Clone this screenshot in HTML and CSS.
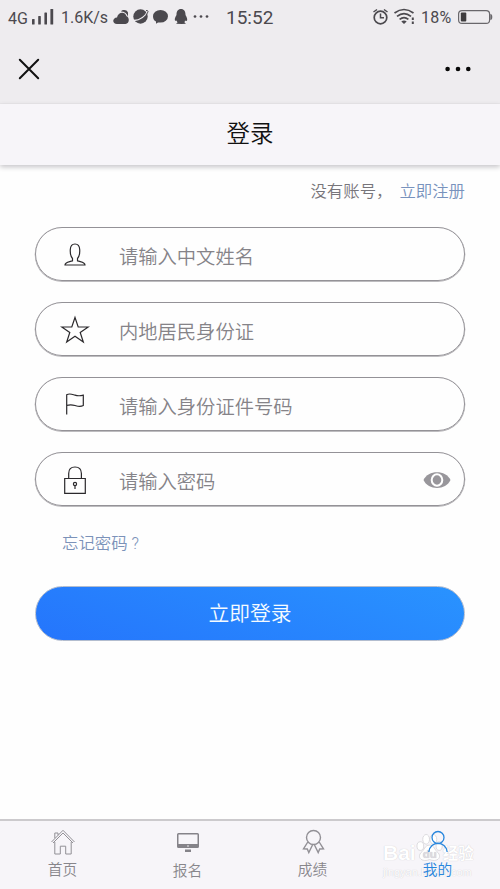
FILE: index.html
```html
<!DOCTYPE html>
<html lang="zh-CN">
<head>
<meta charset="utf-8">
<title>登录</title>
<link rel="stylesheet" href="styles.css">
</head>
<body>
<div class="app">
  <div class="status">
    <span class="net">4G</span>
    <svg class="signal" width="22" height="16" viewBox="0 0 22 16" fill="#4b494e"><rect y="10" width="2.6" height="5.5" rx=".6"/><rect x="6.2" y="7" width="2.6" height="8.5" rx=".6"/><rect x="12.4" y="3.5" width="2.6" height="12" rx=".6"/><rect x="18.4" y="0" width="2.8" height="15.5" rx=".6"/></svg>
    <span class="speed">1.6K/s</span>
    <svg class="apps" width="98" height="18" viewBox="112 8 98 18" fill="#4b494e"><path d="M117 24C112 24 112 17.800 117 17.500C118 12 125 11 126.500 16.300C129.500 17 130 23.800 125.500 24Z"/><path d="M121 11.500C122.500 9.300 127 9.500 128 12.500L128 16.500C126.500 13 124.500 11.500 121 11.500Z"/><circle cx="140.500" cy="16.500" r="7.200"/><path d="M134 20.500Q143 20 148 11" fill="none" stroke="#eeecef" stroke-width="1.300"/><path d="M146 10.500Q150 10 146 15" fill="none" stroke="#4b494e"/><path d="M153 16.200a7.500 6.300 0 1 1 7.500 6.300l-2.500 0-2 1.300 0-2.200Q153 20 153 16.200Z"/><path d="M176.500 15C176 7 186 7 185.500 15C187.500 18 187.800 21 186 21L185 20.500 184.500 22.500 186 23.700 181.700 24 176 23.700 177.500 22.500 176.500 20.500C174 21.500 174.500 18 176.500 15Z"/><circle cx="195" cy="16.500" r="1.350"/><circle cx="201" cy="16.500" r="1.350"/><circle cx="207" cy="16.500" r="1.350"/></svg>
    <span class="clock">15:52</span>
    <svg class="sys" width="46" height="18" viewBox="371 8 46 18" fill="none" stroke="#4b494e" stroke-width="1.700"><circle cx="380.500" cy="17.500" r="6.300"/><path d="M380.500 13.500V17.700H384M373.500 12L377 9.500M384 9.500L387.500 12" stroke-width="1.500"/><path d="M394.500 13Q404 6 413.500 13M397 16.300Q404 10.800 411 16.300M399.600 19.300Q404 15.800 408.400 19.300"/><path d="M401.300 21.500Q404 19.500 406.700 21.500L404 24Z" fill="#4b494e" stroke="none"/><path d="M412.800 17.500V20M412.800 21.500V24" stroke-width="2"/></svg>
    <span class="percent">18%</span>
    <svg class="battery" width="36" height="16" viewBox="457 9 36 16"><rect x="458.600" y="10.600" width="31" height="12.800" rx="3.500" fill="none" stroke="#69676b" stroke-width="1.200"/><rect x="460.800" y="12.500" width="5.500" height="9" rx="1" fill="#3e3c3e"/><path d="M490.300 14Q492.300 14 492.300 17T490.300 20Z" fill="#69676b"/></svg>
  </div>
  <div class="nav">
    <svg width="22" height="22" viewBox="0 0 22 22" fill="none" stroke="#111" stroke-width="2" stroke-linecap="round"><path d="M1.800 1.800L20.200 20.200M20.200 1.800L1.800 20.200"/></svg>
    <svg width="28" height="6" viewBox="0 0 28 6" fill="#080808"><circle cx="3.600" cy="3" r="2.300"/><circle cx="14" cy="3" r="2.300"/><circle cx="24.300" cy="3" r="2.300"/></svg>
  </div>
  <h1 class="title">登录</h1>
  <main class="login">
    <p class="register"><span>没有账号，</span><a>立即注册</a></p>
    <div class="field">
      <svg class="icon" width="30" height="30" viewBox="0 0 30 30"><path d="M5 25H25C25 22.300 22 22.300 17.500 20.900V18.500C18.800 17 20 14 19.700 9.500C19.500 5.500 18 4 15 4S10.500 5.500 10.300 9.500C10 14 11.200 17 12.500 18.500V20.900C8 22.300 5 22.300 5 25Z"/></svg>
      <span>请输入中文姓名</span>
    </div>
    <div class="field">
      <svg class="icon" width="30" height="30" viewBox="0 0 30 30"><path d="M15 2.500L18.200 12H28.200L20.200 17.500L23.300 27L15 21.200L6.700 27L9.800 17.500L1.800 12H11.800Z"/></svg>
      <span>内地居民身份证</span>
    </div>
    <div class="field">
      <svg class="icon" width="30" height="30" viewBox="0 0 30 30"><path d="M6.700 24.500V4.700C10 3 12.500 4.500 15 5.200S20 6 23.300 5.200V15.500C20 17.300 17.500 16.200 15 15.500S10 14.400 6.700 15.500"/></svg>
      <span>请输入身份证件号码</span>
    </div>
    <div class="field">
      <svg class="icon" width="30" height="30" viewBox="0 0 30 30"><path d="M4.700 13.500H25.300V28.300H4.700ZM8.700 13.500V8.500Q8.700 2 15 2T21.400 8.500V13.500"/><circle cx="15" cy="19" r="1.600"/><path d="M15 20.600V24"/></svg>
      <span>请输入密码</span>
      <svg class="eye" width="28" height="18" viewBox="0 0 28 18"><path d="M.5 9C5-1.500 23-1.500 27.500 9C23 19.500 5 19.500 .5 9Z" fill="#98969b"/><ellipse cx="14" cy="9" rx="5.300" ry="5.700" fill="#98969b" stroke="#fff" stroke-width="2"/></svg>
    </div>
    <a class="forgot">忘记密码<span>?</span></a>
    <div class="submit">立即登录</div>
  </main>
  <footer class="tabs">
    <div class="tab">
      <svg width="26" height="28" viewBox="0 0 26 28" fill="none" stroke="#929096" stroke-width="1"><path d="M1.500 14L13 2.300L24.500 14M3 15L13 5L23 15M4.800 14V26H10.300V18.200H15.700V26H21.200V14M4.800 10.200V5H8V7.200"/></svg>
      <span>首页</span>
    </div>
    <div class="tab low">
      <svg width="26" height="28" viewBox="0 0 26 28" fill="#858389"><path fill-rule="evenodd" d="M3.500 5H22.500Q24 5 24 6.500V18.500Q24 20 22.500 20H3.500Q2 20 2 18.500V6.500Q2 5 3.500 5ZM3.500 6.500V16H22.500V6.500Z"/><rect x="10" y="21.500" width="6" height="2.500"/><circle cx="13" cy="18" r=".8" fill="#f7f5f9"/></svg>
      <span>报名</span>
    </div>
    <div class="tab">
      <svg width="26" height="28" viewBox="0 0 26 28" fill="none" stroke="#929096" stroke-width="1.400"><circle cx="13.500" cy="9.500" r="7"/><path d="M7.800 14L3.500 20.800L7.300 21L8.800 24.500L12.500 17M19.200 14L23.500 20.800L19.700 21L18.200 24.500L14.500 17"/></svg>
      <span>成绩</span>
    </div>
    <div class="tab active">
      <svg width="26" height="28" viewBox="0 0 26 28" fill="none" stroke="#2886dd" stroke-width="1.300"><circle cx="13" cy="9.500" r="6"/><path d="M3.800 24C5 12.500 21 12.500 22.200 24"/></svg>
      <span>我的</span>
    </div>
    <div class="watermark">
      <div class="brand"><span>Bai</span><svg width="27" height="30" viewBox="0 0 28 30"><g fill="#fff" stroke="#d3d1d6" stroke-width=".8"><ellipse cx="4.500" cy="13" rx="3.500" ry="4.500"/><ellipse cx="10.500" cy="6" rx="3.500" ry="5"/><ellipse cx="18" cy="6" rx="3.500" ry="5"/><ellipse cx="24" cy="13" rx="3.200" ry="4.500"/><path d="M14 12C19 12 19 17 23 20C27 25 22 30 14 27C6 30 1 25 5 20C9 17 9 12 14 12Z"/></g><text x="7" y="25" class="du">du</text></svg><span class="cn">经验</span></div>
      <div class="url">jingyan.baidu.com</div>
    </div>
  </footer>
</div>
</body>
</html>
```
FILE: styles.css
```css
* { box-sizing: border-box; }
body {
  margin: 0;
  background: #fefefe;
  font-family: Roboto, "Noto Sans CJK SC", sans-serif;
  font-weight: 350;
}
.app { width: 500px; height: 889px; display: flex; flex-direction: column; overflow: hidden; }
.status {
  height: 34px;
  flex: none;
  display: flex;
  align-items: center;
  padding-left: 8px;
  background: #eeecef;
  color: #4b494e;
  font-weight: 400;
  white-space: nowrap;
}
.status svg { flex: none; }
.net { width: 24px; font-size: 16px; padding-top: 2px; }
.signal { margin-right: 7px; }
.speed { width: 49px; font-size: 16px; padding-top: 1px; }
.clock { width: 160px; padding-left: 16px; font-size: 19px; }
.percent { width: 36px; padding-left: 4px; font-size: 16px; letter-spacing: .3px; }
.sys { margin-left: 1px; }
.apps { margin-left: 2px; }
.battery { margin-left: 4px; }
.nav {
  height: 70px;
  flex: none;
  display: flex;
  align-items: center;
  justify-content: space-between;
  padding: 0 28px 0 18px;
  background: #eeecef;
  border-bottom: 1px solid #e8e6e9;
}
.title {
  margin: 0;
  height: 61px;
  flex: none;
  background: #f7f5f9;
  box-shadow: 0 2px 5px #c5c3c7;
  text-align: center;
  font-size: 23.5px;
  line-height: 60px;
  font-weight: 350;
  color: #111;
}
.login { flex: 1; padding: 0 35px; display: flex; flex-direction: column; }
.register {
  margin: 0 0 8px;
  height: 54px;
  line-height: 54px;
  display: flex;
  justify-content: flex-end;
  font-size: 16.4px;
  color: #77757a;
}
.register a { margin-left: 7px; color: #7892bd; }
.field {
  height: 54px;
  flex: none;
  margin-bottom: 21px;
  border: 1px solid #949297;
  box-shadow: 0 .5px 0 .3px #a8a6aa;
  border-radius: 27px;
  display: flex;
  align-items: center;
  padding: 0 13px 0 24px;
  font-size: 19.3px;
  color: #858388;
}
.field span { margin-left: 29px; padding-top: 4px; }
.icon { fill: none; stroke: #2b292c; stroke-width: 1.200; margin-top: 1px; }
.eye { margin-left: auto; margin-top: 2px; }
.forgot { margin: 0 0 0 27px; height: 59px; line-height: 33px; font-size: 16.4px; color: #7b92b9; }
.forgot span { margin-left: 4px; }
.submit {
  height: 55px;
  flex: none;
  border: 1px solid #b3bdcf;
  border-radius: 28px;
  background: linear-gradient(20deg, #2575fc, #2993ff);
  color: #f5fbff;
  text-align: center;
  line-height: 54px;
  font-size: 20.8px;
}
.tabs {
  height: 70px;
  flex: none;
  display: flex;
  position: relative;
  background: #f7f5f9;
  border-top: 2px solid #cccacd;
}
.tab {
  flex: 1;
  display: flex;
  flex-direction: column;
  align-items: center;
  padding-top: 7px;
  font-size: 14.7px;
  line-height: 28px;
  color: #88868b;
  position: relative;
  z-index: 1;
}
.tab svg { flex: none; }
.low span { padding-top: 1px; }
.active { color: #2886dd; }
.watermark {
  position: absolute;
  left: 383px;
  top: 10px;
  width: 95px;
  color: #fff;
  text-shadow: 0 0 1px #c0bec4;
}
.brand {
  display: flex;
  align-items: flex-end;
  height: 34px;
  font: 700 21px/25px "Liberation Sans", sans-serif;
}
.brand svg { margin-bottom: 2px; flex: none; }
.cn { font-family: "Noto Sans CJK SC", sans-serif; font-size: 15.5px; }
.du { font: 700 12px "Liberation Sans", sans-serif; fill: #dcdae0; }
.url { font: 11px/14px "Liberation Sans", sans-serif; }
```
